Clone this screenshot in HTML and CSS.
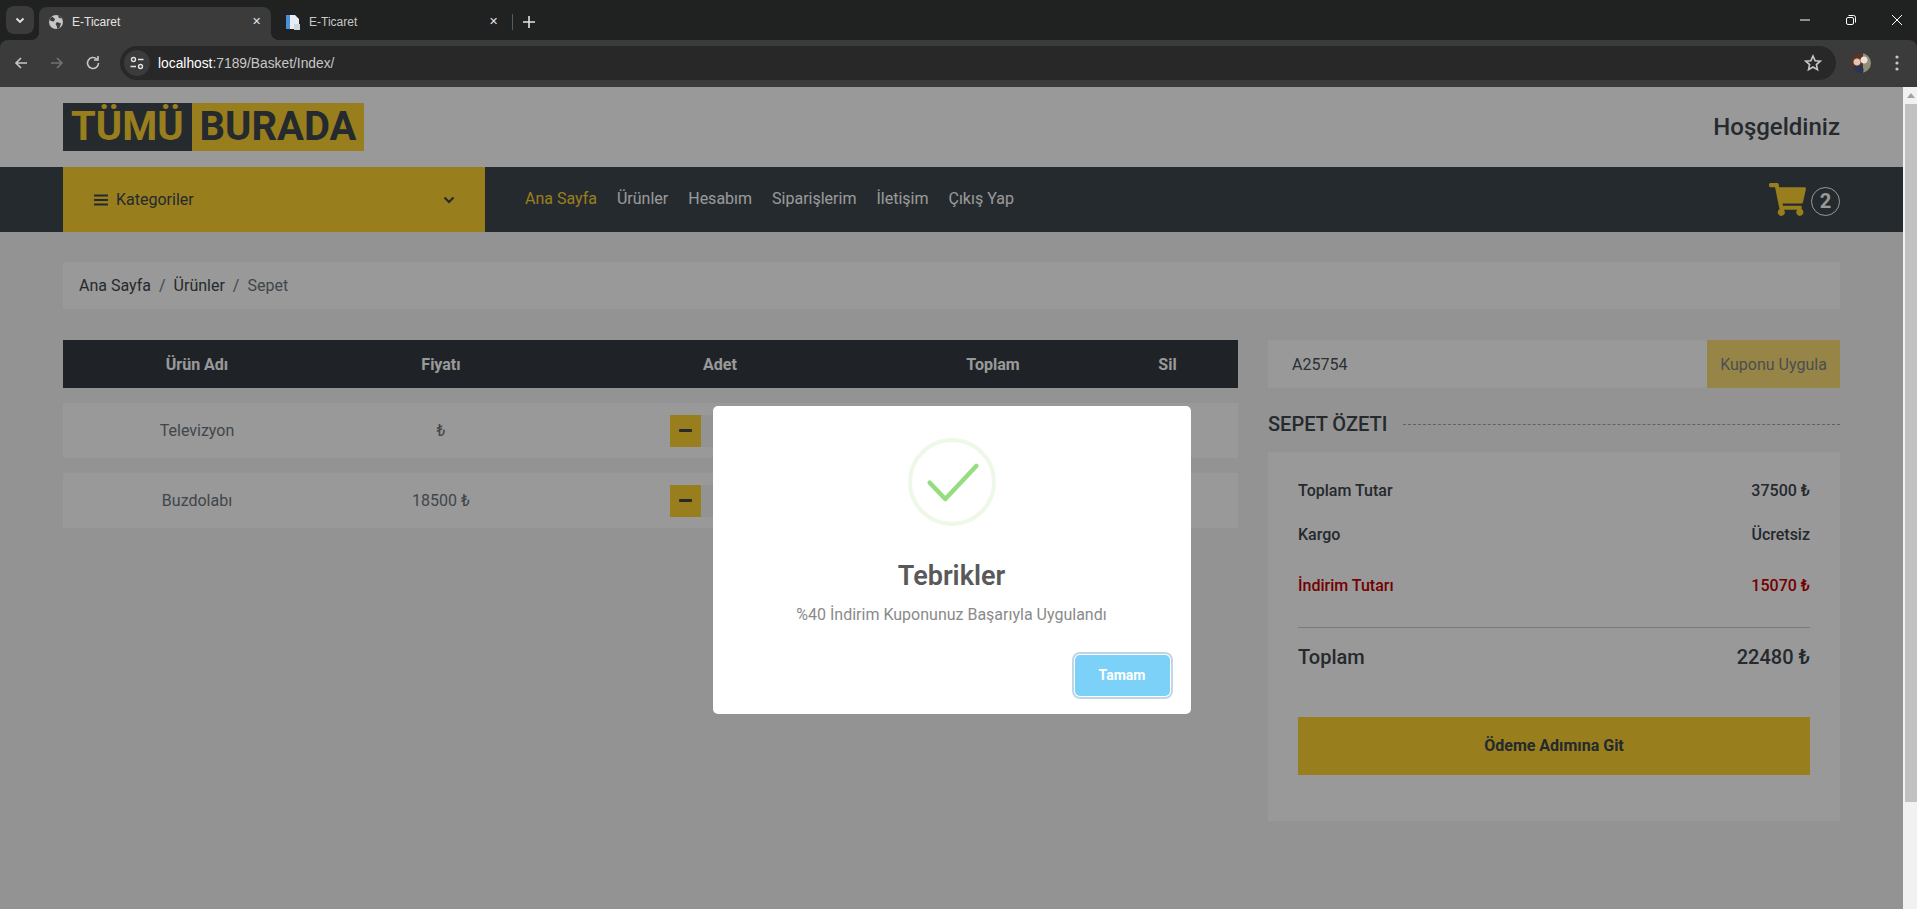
FILE: index.html
```html
<!DOCTYPE html>
<html lang="en">
<head>
  <meta charset="UTF-8">
  <meta name="viewport" content="width=device-width, initial-scale=1.0">
  <title>E-Ticaret</title>
  <link rel="stylesheet" href="styles.css">
</head>
<body>
  <!-- Browser tabs -->
  <div class="tabstrip">
    <button class="tab-search">
      <svg width="12" height="12" viewBox="0 0 12 12"><path d="M2.500 4.500 6 8l3.500-3.500" fill="none" stroke="#e3e3e3" stroke-width="1.800"/></svg>
    </button>
    <div class="tab tab-active">
      <svg class="tab-icon" width="16" height="16" viewBox="0 0 16 16"><circle cx="8" cy="8" r="7" fill="#c4c7c5"/><path d="M4 2.500 7 5 6 7.500 3 7 1.500 5.500ZM9 8l4 1.500-1.500 4L9.500 15 8.500 11.500 7.500 10ZM10 1.500l1 2.500 2.500 0.500-1-2Z" fill="#3b3b3b"/></svg>
      <span class="tab-title">E-Ticaret</span>
      <span class="tab-close">✕</span>
    </div>
    <div class="tab tab-second">
      <svg class="tab-icon" width="16" height="16" viewBox="0 0 16 16"><path d="M1 1h9l4 4v10H1z" fill="#e8edf3"/><path d="M1 1h4v14H1z" fill="#4a90d9"/><path d="M9 10h6v6H9z" fill="#cfd6dd"/></svg>
      <span class="tab-title">E-Ticaret</span>
      <span class="tab-close">✕</span>
    </div>
    <span class="tab-sep"></span>
    <svg class="tab-new" width="14" height="14" viewBox="0 0 14 14"><path d="M7 1v12M1 7h12" stroke="#e3e3e3" stroke-width="1.600"/></svg>
    <div class="win-controls">
      <svg width="12" height="12" viewBox="0 0 12 12"><path d="M1 6h10" stroke="#fff"/></svg>
      <svg width="12" height="12" viewBox="0 0 12 12"><rect x="1.500" y="3.500" width="7" height="7" rx="1.500" fill="none" stroke="#fff"/><path d="M3.500 1.500h5a2 2 0 0 1 2 2v5" fill="none" stroke="#fff"/></svg>
      <svg width="12" height="12" viewBox="0 0 12 12"><path d="M1 1l10 10M11 1 1 11" stroke="#fff"/></svg>
    </div>
  </div>

  <!-- Browser toolbar -->
  <div class="toolbar">
    <svg class="tool" width="16" height="16" viewBox="0 0 16 16"><path d="M14 8H3M8 3 3 8l5 5" fill="none" stroke="#c7c7c7" stroke-width="1.600"/></svg>
    <svg class="tool" width="16" height="16" viewBox="0 0 16 16"><path d="M2 8h11M8 3l5 5-5 5" fill="none" stroke="#737373" stroke-width="1.600"/></svg>
    <svg class="tool" width="16" height="16" viewBox="0 0 16 16"><path d="M13.500 8A5.500 5.500 0 1 1 11.800 4M13 1v4H9" fill="none" stroke="#c7c7c7" stroke-width="1.600"/></svg>
    <div class="address">
      <span class="site-info">
        <svg width="16" height="16" viewBox="0 0 16 16"><circle cx="4.500" cy="4.500" r="2" fill="none" stroke="#e3e3e3" stroke-width="1.400"/><path d="M9 4.500h5.500M1.500 11.500H7" stroke="#e3e3e3" stroke-width="1.400"/><circle cx="11.500" cy="11.500" r="2" fill="none" stroke="#e3e3e3" stroke-width="1.400"/></svg>
      </span>
      <span class="url"><b>localhost</b>:7189/Basket/Index/</span>
      <svg class="star" width="18" height="18" viewBox="0 0 18 18"><path d="m9 2 2.100 4.700 5.100.5-3.800 3.400 1.100 5L9 13l-4.500 2.600 1.100-5-3.800-3.400 5.100-.5z" fill="none" stroke="#c7c7c7" stroke-width="1.600"/></svg>
    </div>
    <span class="avatar"></span>
    <svg class="kebab" width="4" height="16" viewBox="0 0 4 16"><circle cx="2" cy="2" r="1.600" fill="#c7c7c7"/><circle cx="2" cy="8" r="1.600" fill="#c7c7c7"/><circle cx="2" cy="14" r="1.600" fill="#c7c7c7"/></svg>
  </div>

  <div class="viewport">
    <div class="page">
      <!-- Header -->
      <header class="site-head">
        <a class="logo"><span class="logo-dark">Tümü</span><span class="logo-light">Burada</span></a>
        <h3 class="welcome">Hoşgeldiniz</h3>
      </header>

      <!-- Navigation -->
      <nav class="navbar">
        <div class="cat-toggle">
          <svg width="14" height="12" viewBox="0 0 14 12"><path d="M0 1.500h14M0 6h14M0 10.500h14" stroke="#3d464d" stroke-width="2"/></svg>
          <span>Kategoriler</span>
          <svg class="cat-chevron" width="12" height="8" viewBox="0 0 12 8"><path d="M1.500 1.500 6 6l4.500-4.500" fill="none" stroke="#3d464d" stroke-width="2.200"/></svg>
        </div>
        <div class="nav-links">
          <a class="nav-link active">Ana Sayfa</a>
          <a class="nav-link">Ürünler</a>
          <a class="nav-link">Hesabım</a>
          <a class="nav-link">Siparişlerim</a>
          <a class="nav-link">İletişim</a>
          <a class="nav-link">Çıkış Yap</a>
        </div>
        <div class="cart">
          <svg width="37" height="33" viewBox="0 0 576 512"><path d="M528.120 301.319l47.273-208C578.806 78.301 567.391 64 551.990 64H159.208l-9.166-44.810C147.758 8.021 137.930 0 126.529 0H24C10.745 0 0 10.745 0 24v16c0 13.255 10.745 24 24 24h69.883l70.248 343.435C147.325 417.100 136 435.222 136 456c0 30.928 25.072 56 56 56s56-25.072 56-56c0-15.674-6.447-29.835-16.824-40h209.647C430.447 426.165 424 440.326 424 456c0 30.928 25.072 56 56 56s56-25.072 56-56c0-22.172-12.888-41.332-31.579-50.405l5.517-24.276c3.413-15.018-8.002-29.319-23.403-29.319H218.117l-6.545-32h293.145c11.206 0 20.920-7.754 23.403-18.681z" fill="#ffd333"/></svg>
          <span class="cart-badge">2</span>
        </div>
      </nav>

      <div class="breadcrumb">
        <a>Ana Sayfa</a><span class="crumb-sep">/</span><a>Ürünler</a><span class="crumb-sep">/</span><span class="crumb-current">Sepet</span>
      </div>

      <div class="basket">
        <!-- Basket table -->
        <section class="basket-list">
          <div class="basket-row basket-head">
            <span>Ürün Adı</span><span>Fiyatı</span><span>Adet</span><span>Toplam</span><span>Sil</span>
          </div>
          <div class="basket-row">
            <span>Televizyon</span><span>₺</span>
            <span class="qty">
              <button class="qty-btn"><svg width="13" height="3" viewBox="0 0 13 3"><rect width="13" height="3" rx="1" fill="#3d464d"/></svg></button>
              <input class="qty-input" value="1">
              <button class="qty-btn"><svg width="13" height="13" viewBox="0 0 13 13"><path d="M5 0h3v5h5v3H8v5H5V8H0V5h5z" fill="#3d464d"/></svg></button>
            </span>
            <span>₺</span><span></span>
          </div>
          <div class="basket-row">
            <span>Buzdolabı</span><span>18500 ₺</span>
            <span class="qty">
              <button class="qty-btn"><svg width="13" height="3" viewBox="0 0 13 3"><rect width="13" height="3" rx="1" fill="#3d464d"/></svg></button>
              <input class="qty-input" value="1">
              <button class="qty-btn"><svg width="13" height="13" viewBox="0 0 13 13"><path d="M5 0h3v5h5v3H8v5H5V8H0V5h5z" fill="#3d464d"/></svg></button>
            </span>
            <span>18500 ₺</span><span></span>
          </div>
        </section>

        <!-- Coupon and summary -->
        <aside class="basket-side">
          <div class="coupon">
            <input class="coupon-input" value="A25754">
            <button class="coupon-btn">Kuponu Uygula</button>
          </div>
          <h5 class="section-title"><span>Sepet Özeti</span></h5>
          <div class="summary">
            <div class="sum-row"><span>Toplam Tutar</span><span>37500 ₺</span></div>
            <div class="sum-row sum-cargo"><span>Kargo</span><span>Ücretsiz</span></div>
            <div class="sum-row sum-discount"><span>İndirim Tutarı</span><span>15070 ₺</span></div>
            <div class="sum-row sum-total"><span>Toplam</span><span>22480 ₺</span></div>
            <button class="checkout-btn">Ödeme Adımına Git</button>
          </div>
        </aside>
      </div>

      <!-- Alert -->
      <div class="overlay">
        <div class="modal">
          <svg class="modal-icon" width="88" height="88" viewBox="0 0 88 88"><circle cx="44" cy="44" r="42" fill="none" stroke="#edf8e7" stroke-width="4"/><path d="M21.700 44.700 37.300 61l31-33" fill="none" stroke="#96dc80" stroke-width="4.500" stroke-linecap="round" stroke-linejoin="round"/></svg>
          <div class="modal-title">Tebrikler</div>
          <div class="modal-text">%40 İndirim Kuponunuz Başarıyla Uygulandı</div>
          <div class="modal-footer"><button class="modal-btn">Tamam</button></div>
        </div>
      </div>
    </div>

    <!-- Page scrollbar -->
    <div class="scrollbar">
      <span class="scroll-up"></span>
      <span class="scroll-thumb"></span>
    </div>
  </div>
</body>
</html>
```

FILE: styles.css
```css
* {
  box-sizing: border-box;
}

html, body {
  height: 100%;
}

body {
  margin: 0;
  font-family: Roboto, "Liberation Sans", sans-serif;
  font-size: 16px;
  color: #6c757d;
  background-color: #202121;
  overflow: hidden;
}

button, input {
  font-family: inherit;
  font-size: 16px;
  border: none;
  outline: none;
}

/* Browser chrome */
.tabstrip {
  height: 40px;
  display: flex;
  align-items: flex-end;
  padding-left: 6px;
  background-color: #202121;
  font-family: "Liberation Sans", sans-serif;
}

.tab-search {
  width: 28px;
  height: 28px;
  margin-bottom: 6px;
  margin-right: 5px;
  padding: 0;
  display: flex;
  align-items: center;
  justify-content: center;
  border-radius: 8px;
  background-color: #3b3b3b;
}

.tab {
  position: relative;
  width: 232px;
  height: 33px;
  display: flex;
  align-items: center;
  padding: 0 10px 4px 9px;
  border-radius: 8px 8px 0 0;
  font-size: 12px;
  color: #c7c7c7;
}

.tab-second {
  margin-left: 5px;
}

.tab-active {
  background-color: #3b3b3b;
  color: #e3e3e3;
}

.tab-active::before, .tab-active::after {
  content: "";
  position: absolute;
  bottom: 0;
  width: 8px;
  height: 8px;
}

.tab-active::before {
  left: -8px;
  background: radial-gradient(circle at 0 0, transparent 8px, #3b3b3b 8px);
}

.tab-active::after {
  right: -8px;
  background: radial-gradient(circle at 100% 0, transparent 8px, #3b3b3b 8px);
}

.tab-icon {
  flex: none;
  margin-right: 8px;
}

.tab-title {
  flex: 1;
}

.tab-close {
  font-size: 11px;
  color: #e3e3e3;
}

.tab-sep {
  width: 1px;
  height: 16px;
  margin: 0 0 10px 4px;
  background-color: #5a5a5a;
}

.tab-new {
  margin: 0 0 11px 9px;
}

.win-controls {
  margin-left: auto;
  display: flex;
  gap: 34px;
  padding-right: 14px;
  margin-bottom: 14px;
}

.toolbar {
  height: 47px;
  display: flex;
  align-items: center;
  padding: 0 12px 1px 13px;
  background-color: #3b3b3b;
  border-radius: 8px 8px 0 0;
}

.tool {
  flex: none;
  margin-right: 20px;
}

.address {
  flex: 1;
  height: 34px;
  margin-left: -1px;
  display: flex;
  align-items: center;
  padding: 0 14px 0 4px;
  border-radius: 17px;
  background-color: #282828;
  font-family: "Liberation Sans", sans-serif;
  font-size: 13.800px;
  color: #c7c7c7;
}

.site-info {
  width: 26px;
  height: 26px;
  display: flex;
  align-items: center;
  justify-content: center;
  border-radius: 50%;
  background-color: #3b3b3b;
  margin-right: 8px;
}

.url b {
  font-weight: 400;
  color: #fff;
}

.star {
  margin-left: auto;
}

.avatar {
  flex: none;
  width: 20px;
  height: 20px;
  margin: 0 24px 0 15px;
  border-radius: 50%;
  background:
    radial-gradient(circle at 30% 45%, #e2c4ae 0 3px, transparent 4px),
    radial-gradient(circle at 65% 35%, #f0e0d4 0 3px, transparent 4px),
    radial-gradient(circle at 35% 85%, #2b3550 0 5px, transparent 6px),
    linear-gradient(90deg, #5a3226 0 60%, #8f8f78 60%);
}

.kebab {
  flex: none;
  margin-right: 6px;
}

.viewport {
  height: 822px;
  display: flex;
}

.scrollbar {
  flex: none;
  width: 14px;
  padding-left: 2px;
  display: flex;
  flex-direction: column;
  background-color: #f1f1f1;
}

.scroll-up {
  height: 17px;
  display: flex;
  align-items: center;
  justify-content: center;
}

.scroll-up::before {
  content: "";
  border: 4px solid transparent;
  border-top: 0;
  border-bottom: 5px solid #a3a3a3;
}

.scroll-thumb {
  height: 698px;
  background-color: #c1c1c1;
}

/* Page */
.page {
  position: relative;
  flex: 1;
  min-width: 0;
  background-color: #f5f5f5;
  overflow: hidden;
}

.site-head {
  height: 80px;
  padding: 16px 63px 0;
  display: flex;
  justify-content: space-between;
  background-color: #fff;
}

.logo {
  display: flex;
  height: 48px;
  font-size: 40px;
  font-weight: 700;
  line-height: 48px;
  text-transform: uppercase;
}

.logo-dark {
  padding: 0 8px;
  color: #ffd333;
  background-color: #3d464d;
}

.logo-light {
  padding: 0 8px;
  color: #3d464d;
  background-color: #ffd333;
}

.welcome {
  margin: 0;
  padding-top: 10px;
  font-size: 24px;
  font-weight: 500;
  line-height: 28px;
  color: #3d464d;
}

.navbar {
  height: 65px;
  padding: 0 63px;
  display: flex;
  align-items: center;
  background-color: #3d464d;
}

.cat-toggle {
  width: 422px;
  height: 65px;
  padding: 0 30px 0 31px;
  display: flex;
  align-items: center;
  gap: 8px;
  background-color: #ffd333;
  color: #3d464d;
}

.cat-chevron {
  margin-left: auto;
}

.nav-links {
  display: flex;
  gap: 20px;
  padding: 0 0 2px 40px;
}

.nav-link {
  color: #fff;
}

.nav-link.active {
  color: #ffd333;
}

.cart {
  margin-left: auto;
  display: flex;
  align-items: center;
  gap: 5px;
}

.cart-badge {
  width: 29px;
  height: 29px;
  margin-top: 3px;
  display: flex;
  align-items: center;
  justify-content: center;
  border: 1px solid #fff;
  border-radius: 50%;
  color: #fff;
  font-size: 20px;
  font-weight: 700;
}

.breadcrumb {
  height: 47px;
  margin: 30px 63px 31px;
  padding: 0 16px;
  display: flex;
  align-items: center;
  background-color: #fff;
}

.breadcrumb a {
  color: #3d464d;
}

.crumb-sep {
  padding: 0 8px;
}

.basket {
  padding: 0 63px;
  display: flex;
  gap: 30px;
}

.basket-list {
  width: 1175px;
  flex: none;
}

.basket-row {
  height: 55px;
  margin-bottom: 15px;
  display: grid;
  grid-template-columns: 268px 220px 338px 208px 141px;
  align-items: center;
  text-align: center;
  background-color: #fff;
}

.basket-head {
  height: 48px;
  margin-bottom: 15px;
  background-color: #343a40;
  color: #fff;
  font-weight: 700;
}

.qty {
  display: flex;
  justify-content: center;
}

.qty-btn {
  width: 31px;
  height: 32px;
  padding: 0;
  display: flex;
  align-items: center;
  justify-content: center;
  background-color: #ffd333;
}

.qty-input {
  width: 38px;
  height: 32px;
  text-align: center;
  background-color: #f5f5f5;
  color: #6c757d;
}

.basket-side {
  flex: 1;
}

.coupon {
  height: 48px;
  display: flex;
}

.coupon-input {
  flex: 1;
  min-width: 0;
  padding: 0 24px;
  background-color: #fff;
  color: #495057;
}

.coupon-btn {
  width: 133px;
  padding: 0;
  background-color: #ffd333;
  color: #3d464d;
  opacity: .65;
}

.section-title {
  height: 24px;
  margin: 24px 0 16px;
  display: flex;
  align-items: center;
  gap: 16px;
  font-size: 20px;
  font-weight: 500;
  line-height: 24px;
  color: #3d464d;
  text-transform: uppercase;
}

.section-title::after {
  content: "";
  flex: 1;
  border-top: 1px dashed #a0a4a8;
}

.summary {
  height: 369px;
  padding: 27px 30px 0;
  background-color: #fff;
  color: #3d464d;
}

.sum-row {
  display: flex;
  justify-content: space-between;
  font-weight: 500;
  line-height: 24px;
}

.sum-cargo {
  margin-top: 20px;
}

.sum-discount {
  margin-top: 27px;
  padding-bottom: 29px;
  border-bottom: 1px solid #ccc;
  color: #c00000;
}

.sum-total {
  margin-top: 17px;
  font-size: 20px;
}

.checkout-btn {
  width: 100%;
  height: 58px;
  margin-top: 48px;
  padding-bottom: 3px;
  background-color: #ffd333;
  color: #3d464d;
  font-weight: 700;
}

/* Alert overlay */
.overlay {
  position: absolute;
  inset: 0;
  padding-top: 319px;
  display: flex;
  justify-content: center;
  align-items: flex-start;
  background-color: rgba(0, 0, 0, .4);
}

.modal {
  width: 478px;
  height: 308px;
  padding: 32px 21px 0;
  display: flex;
  flex-direction: column;
  align-items: center;
  border-radius: 5px;
  background-color: #fff;
}

.modal-icon {
  flex: none;
}

.modal-title {
  margin-top: 32px;
  font-size: 27px;
  font-weight: 600;
  line-height: 36px;
  color: #595959;
}

.modal-text {
  margin-top: 9px;
  font-size: 16px;
  line-height: 24px;
  color: #8a8a8a;
}

.modal-footer {
  width: 100%;
  margin-top: 28px;
  display: flex;
  justify-content: flex-end;
}

.modal-btn {
  width: 95px;
  height: 41px;
  padding-bottom: 3px;
  border-radius: 5px;
  background-color: #7cd1f9;
  color: #fff;
  font-size: 14px;
  font-weight: 700;
  box-shadow: 0 0 0 1px #fff, 0 0 0 3px rgba(43, 114, 165, .29);
}
```
